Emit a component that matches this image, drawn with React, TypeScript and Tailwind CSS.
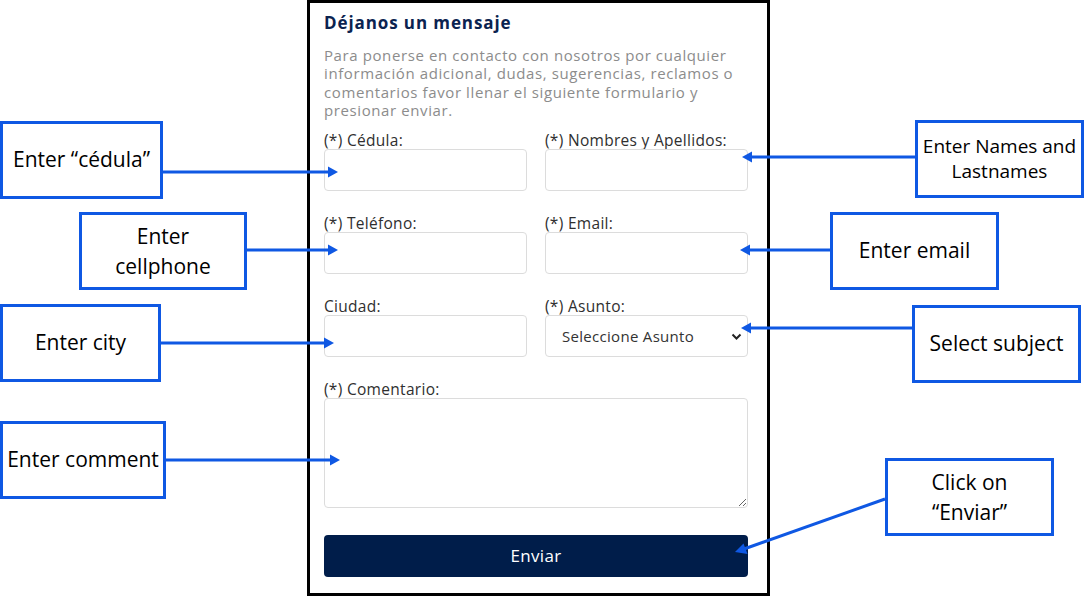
import React from "react";

const callouts = [
  { text: "Enter “cédula”", cls: "left-0 top-[121px] w-[163px] h-[78px] text-[21px]" },
  { text: "Enter cellphone", cls: "left-[79px] top-[212px] w-[168px] h-[78px] text-[21px] leading-[30px] px-6" },
  { text: "Enter city", cls: "left-0 top-[304px] w-[161px] h-[78px] text-[21px]" },
  { text: "Enter comment", cls: "left-0 top-[421px] w-[166px] h-[78px] text-[21px]" },
  { text: "Enter Names and Lastnames", cls: "left-[915px] top-[120px] w-[169px] h-[78px] text-[19px] leading-[25px] px-1" },
  { text: "Enter email", cls: "left-[830px] top-[212px] w-[169px] h-[78px] text-[21px]" },
  { text: "Select subject", cls: "left-[912px] top-[305px] w-[169px] h-[78px] text-[21px]" },
  { text: "Click on “Enviar”", cls: "left-[885px] top-[458px] w-[169px] h-[78px] text-[21px] leading-[30px] px-10" },
];

function Field({ label, children }: { label: string; children: React.ReactNode }) {
  return (
    <div className="flex flex-col">
      <label className="text-[15.5px] leading-[18px] tracking-[0.3px] text-[#2f2f2f]">{label}</label>
      {children}
    </div>
  );
}

const inputCls = "h-[42px] w-full rounded-[4px] border border-[#dcdcdc] bg-white outline-none";

export default function App() {
  return (
    <div
      className="relative w-[1085px] h-[598px] bg-white overflow-hidden"
      style={{ fontFamily: "'Open Sans', sans-serif" }}
    >
      <div className="ml-[307px] w-[463px] border-[3px] border-black bg-white pt-[7px] pb-[16px] pl-[14px] pr-[19px]">
        <h2 className="text-[17px] leading-[25px] font-bold tracking-[0.9px] text-[#0b2350]">
          Déjanos un mensaje
        </h2>
        <p className="mt-[11px] text-[15px] leading-[18.3px] tracking-[0.6px] text-[#8c8c8c]">
          Para ponerse en contacto con nosotros por cualquier información adicional, dudas,
          sugerencias, reclamos o comentarios favor llenar el siguiente formulario y presionar
          enviar.
        </p>

        <form className="mt-3 flex flex-col" onSubmit={(e) => e.preventDefault()}>
          <div className="grid grid-cols-2 gap-x-[18px] gap-y-[23px]">
            <Field label="(*) Cédula:">
              <input className={inputCls} />
            </Field>
            <Field label="(*) Nombres y Apellidos:">
              <input className={inputCls} />
            </Field>
            <Field label="(*) Teléfono:">
              <input className={inputCls} />
            </Field>
            <Field label="(*) Email:">
              <input className={inputCls} />
            </Field>
            <Field label="Ciudad:">
              <input className={inputCls} />
            </Field>
            <Field label="(*) Asunto:">
              <div className="relative">
                <select className={inputCls + " appearance-none pl-4 text-[15px] tracking-[0.3px] text-[#333]"}>
                  <option>Seleccione Asunto</option>
                </select>
                <svg className="absolute right-[6px] top-[18px] pointer-events-none" width="11" height="8" viewBox="0 0 11 8">
                  <path d="M1.5 1.5 L5.5 5.5 L9.5 1.5" stroke="#222" strokeWidth="2" fill="none" />
                </svg>
              </div>
            </Field>
          </div>

          <div className="mt-[23px]">
            <Field label="(*) Comentario:">
              <textarea className="h-[110px] w-full rounded-[4px] border border-[#dcdcdc] bg-white outline-none" />
            </Field>
          </div>

          <button
            type="submit"
            className="mt-[27px] h-[42px] w-full rounded-[4px] bg-[#001d4a] text-[17px] tracking-[0.3px] text-white"
          >
            Enviar
          </button>
        </form>
      </div>

      {callouts.map((c) => (
        <div
          key={c.text}
          className={
            "absolute flex items-center justify-center text-center border-[3px] border-[#0f58e3] bg-white text-black " +
            c.cls
          }
        >
          {c.text}
        </div>
      ))}

      <svg className="absolute inset-0 pointer-events-none" width="1085" height="598">
        <g stroke="#0f58e3" strokeWidth="3">
          <line x1="163" y1="172" x2="330" y2="172" />
          <line x1="247" y1="250" x2="330" y2="250" />
          <line x1="161" y1="343" x2="326" y2="343" />
          <line x1="166" y1="460" x2="332" y2="460" />
          <line x1="915" y1="157" x2="750" y2="157" />
          <line x1="830" y1="250" x2="748" y2="250" />
          <line x1="912" y1="328" x2="749" y2="328" />
          <line x1="885" y1="499" x2="744" y2="549" />
        </g>
        <g fill="#0f58e3">
          <polygon points="338,172 328,166.5 328,177.5" />
          <polygon points="338,250 328,244.5 328,255.5" />
          <polygon points="334,343 324,337.5 324,348.5" />
          <polygon points="340,460 330,454.5 330,465.5" />
          <polygon points="742,157 752,151.5 752,162.5" />
          <polygon points="740,250 750,244.5 750,255.5" />
          <polygon points="741,328 751,322.5 751,333.5" />
          <polygon points="735,552 743.5,543.5 747.5,554" />
        </g>
      </svg>
    </div>
  );
}
